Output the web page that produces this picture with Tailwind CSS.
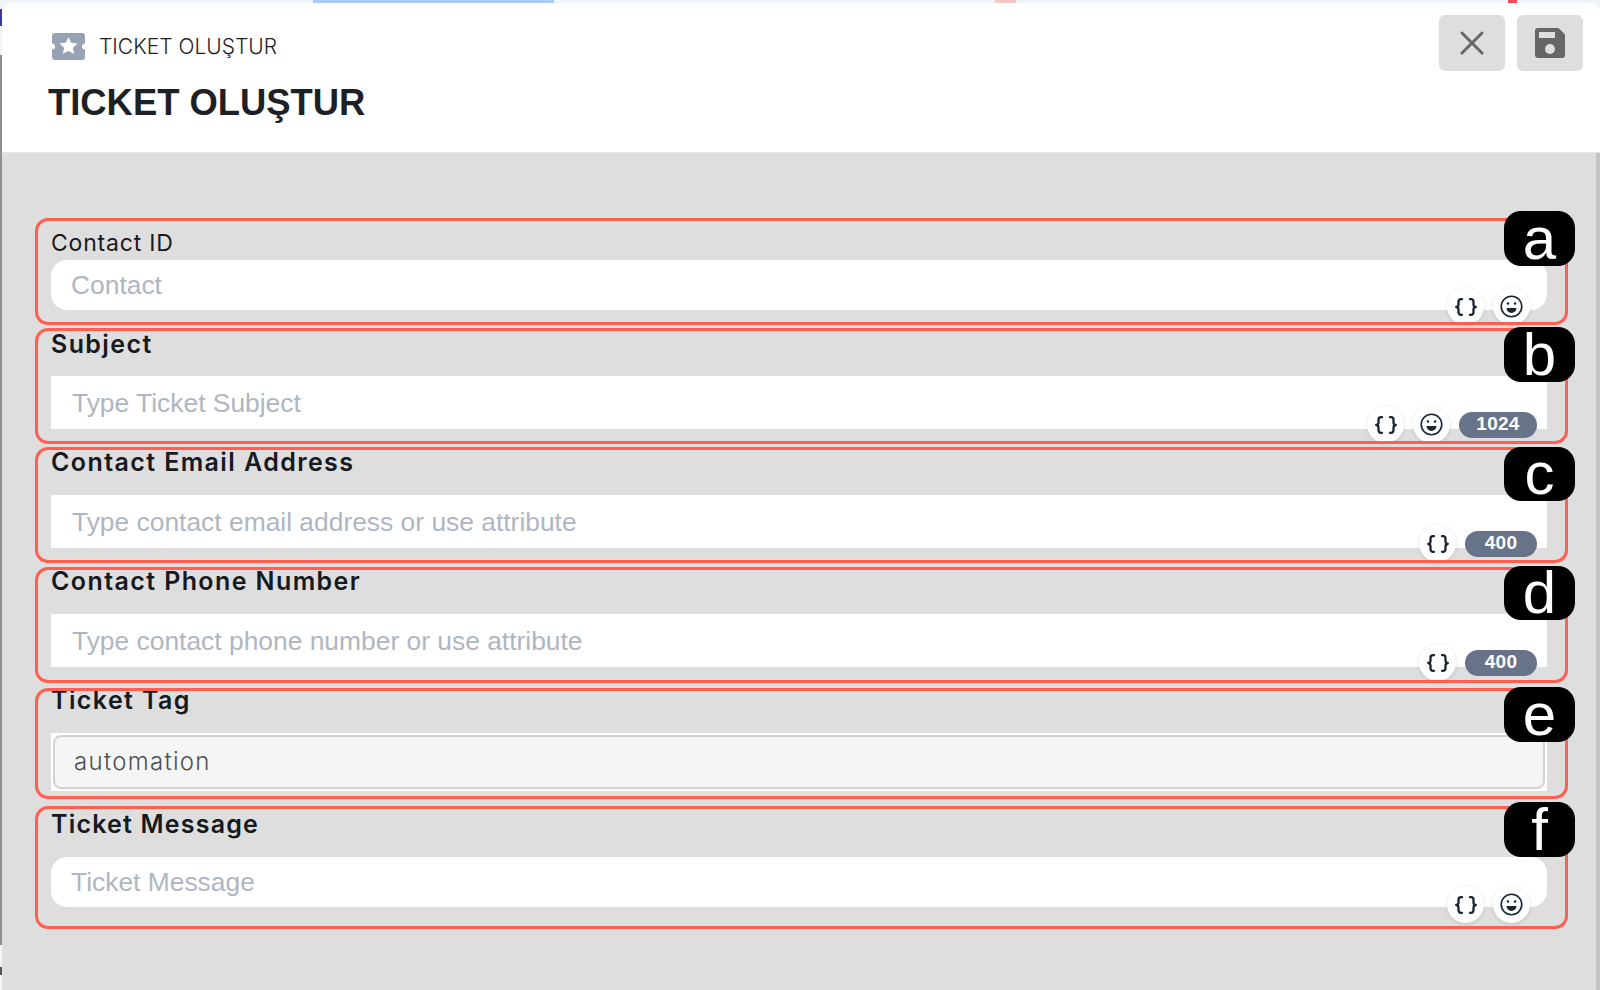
<!DOCTYPE html>
<html lang="tr">
<head>
    <meta charset="UTF-8">
    <meta name="viewport" content="width=device-width, initial-scale=1.0">
    <title>Ticket Oluştur</title>
    <script src="https://cdn.jsdelivr.net/npm/@tailwindcss/browser@4"></script>
</head>
<body class="w-[1600px] h-[990px] overflow-hidden bg-[#f1f4f9] font-['Inter',sans-serif]">
    <svg class="hidden">
        <symbol id="braces" viewBox="0 0 22 18">
            <path d="M7 1.200H6A2.500 2.500 0 0 0 3.500 3.700V6.500A2.500 2.500 0 0 1 1.200 9a2.500 2.500 0 0 1 2.300 2.500v2.800A2.500 2.500 0 0 0 6 16.800h1M15 1.200h1a2.500 2.500 0 0 1 2.500 2.500v2.800A2.500 2.500 0 0 0 20.800 9a2.500 2.500 0 0 0-2.300 2.500v2.800a2.500 2.500 0 0 1-2.500 2.500h-1" fill="none" stroke="#1b2430" stroke-width="2.300" stroke-linecap="round" stroke-linejoin="round"/>
        </symbol>
        <symbol id="smile" viewBox="0 0 24 24">
            <circle cx="12" cy="12" r="10.700" fill="none" stroke="#1b2430" stroke-width="1.700"/>
            <circle cx="8.300" cy="8.800" r="1.300" fill="#1b2430"/>
            <circle cx="15.700" cy="8.800" r="1.300" fill="#1b2430"/>
            <path d="M6.800 13.500h10.400a5.200 5.200 0 0 1-10.400 0z" fill="#1b2430"/>
        </symbol>
    </svg>

    <!-- page behind the modal -->
    <div class="flex h-[3px]">
        <div class="w-[313px]"></div>
        <div class="w-[241px] bg-[#a8cdf9]"></div>
        <div class="w-[441px]"></div>
        <div class="w-[21px] bg-[#f7c4c4]"></div>
        <div class="w-[492px]"></div>
        <div class="w-[9px] bg-[#f8485e]"></div>
    </div>

    <div class="flex h-[987px]">
        <div class="w-[2px] flex flex-col">
            <div class="h-[6px]"></div>
            <div class="h-[17px] bg-[#3b3aa5]"></div>
            <div class="h-[29px]"></div>
            <div class="h-[890px] bg-[#8f8f8f]"></div>
            <div class="h-[22px]"></div>
            <div class="h-[8px] bg-[#555555]"></div>
        </div>

        <main class="flex-1 flex flex-col rounded-tl-[10px] rounded-tr-[10px] overflow-hidden">
            <header class="h-[150px] shrink-0 bg-white flex justify-between pl-[46px] pr-[17px] border-b border-[#e6e6e6]">
                <div>
                    <div class="flex items-center gap-[14px] mt-[31px] pl-[4px] h-[26px]">
                        <svg class="w-[33px] h-[27px] -mt-[2px]" viewBox="0 0 33 27">
                            <path d="M3 0h27a3 3 0 0 1 3 3v7.500a3 3 0 0 0 0 6V24a3 3 0 0 1-3 3H3a3 3 0 0 1-3-3v-7.500a3 3 0 0 0 0-6V3a3 3 0 0 1 3-3z" fill="#97a3b4"/>
                            <path d="M16.500 4l2.700 5.800 6.400.700-4.800 4.300 1.400 6.300-5.700-3.200-5.700 3.200 1.400-6.300-4.800-4.300 6.400-.700z" fill="#fff"/>
                        </svg>
                        <span class="text-[21px] font-light text-[#1f2329] whitespace-nowrap">TICKET OLUŞTUR</span>
                    </div>
                    <h1 class="mt-[21px] font-['Liberation_Sans',sans-serif] font-bold text-[36.400px] leading-[44px] text-[#1d2125] whitespace-nowrap">TICKET OLUŞTUR</h1>
                </div>
                <div class="flex gap-[12px] mt-[12px]">
                    <button class="w-[66px] h-[56px] rounded-[6px] bg-[#dedede] flex items-center justify-center">
                        <svg class="w-[24px] h-[24px]" viewBox="0 0 24 24"><path d="M2 2l20 20M22 2L2 22" stroke="#666" stroke-width="3" stroke-linecap="round"/></svg>
                    </button>
                    <button class="w-[66px] h-[56px] rounded-[6px] bg-[#dedede] flex items-center justify-center">
                        <svg class="w-[30px] h-[30px]" viewBox="0 0 30 30">
                            <path d="M3 0h20.500L30 6.500V27a3 3 0 0 1-3 3H3a3 3 0 0 1-3-3V3a3 3 0 0 1 3-3z" fill="#666"/>
                            <rect x="4" y="4" width="16" height="6" fill="#dedede"/>
                            <circle cx="15" cy="21" r="5" fill="#dedede"/>
                        </svg>
                    </button>
                </div>
            </header>

            <div class="flex-1 flex bg-[#dedede]">
                <div class="flex-1 pl-[33px] pr-[28px] pt-[65px]">

                    <div class="relative h-[107px] flex flex-col pl-[16px] pr-[21px] pt-[11px]">
                        <label class="block text-[23px] leading-[28px] font-normal tracking-[0.8px] text-[#16191d]">Contact ID</label>
                        <div class="relative mt-[3px] h-[50px] rounded-[16px] bg-white pl-[20px] pt-[2px] flex items-center font-['Liberation_Sans',sans-serif] text-[26.400px] text-[#afb6c1]">
                            Contact
                            <div class="absolute right-[17px] bottom-[-15px] flex items-center gap-[9px]">
                                <span class="w-[37px] h-[37px] rounded-full bg-white shadow-[0_1px_4px_rgba(0,0,0,0.12)] flex items-center justify-center"><svg class="w-[22px] h-[18px]"><use href="#braces"/></svg></span>
                                <span class="w-[37px] h-[37px] rounded-full bg-white shadow-[0_1px_4px_rgba(0,0,0,0.12)] flex items-center justify-center"><svg class="w-[23px] h-[23px]"><use href="#smile"/></svg></span>
                            </div>
                        </div>
                        <div class="absolute inset-0 border-[3px] border-[#ff5f50] rounded-[13px] pointer-events-none"></div>
                        <div class="absolute right-[-7px] top-[-7px] w-[71px] h-[55px] rounded-[17px] bg-black text-white font-['Liberation_Sans',sans-serif] text-[60px] leading-[55px] text-center">a</div>
                    </div>

                    <div class="relative h-[116px] mt-[3px] flex flex-col pl-[16px] pr-[21px] pt-[2px]">
                        <label class="block text-[25px] leading-[28px] font-semibold tracking-[1.400px] text-[#16191d]">Subject</label>
                        <div class="relative mt-[18px] h-[53px] bg-white pl-[21px] pt-[2px] flex items-center font-['Liberation_Sans',sans-serif] text-[26.400px] text-[#afb6c1]">
                            Type Ticket Subject
                            <div class="absolute right-[10px] bottom-[-14px] flex items-center gap-[9px]">
                                <span class="w-[37px] h-[37px] rounded-full bg-white shadow-[0_1px_4px_rgba(0,0,0,0.12)] flex items-center justify-center"><svg class="w-[22px] h-[18px]"><use href="#braces"/></svg></span>
                                <span class="w-[37px] h-[37px] rounded-full bg-white shadow-[0_1px_4px_rgba(0,0,0,0.12)] flex items-center justify-center"><svg class="w-[23px] h-[23px]"><use href="#smile"/></svg></span>
                                <span class="w-[78px] h-[26px] rounded-full bg-[#667388] text-white text-[19px] font-bold tracking-[0.3px] flex items-center justify-center">1024</span>
                            </div>
                        </div>
                        <div class="absolute inset-0 border-[3px] border-[#ff5f50] rounded-[13px] pointer-events-none"></div>
                        <div class="absolute right-[-7px] top-[-1px] w-[71px] h-[55px] rounded-[17px] bg-black text-white font-['Liberation_Sans',sans-serif] text-[60px] leading-[55px] text-center">b</div>
                    </div>

                    <div class="relative h-[116px] mt-[3px] flex flex-col pl-[16px] pr-[21px] pt-[1px]">
                        <label class="block text-[25px] leading-[28px] font-semibold tracking-[1.400px] text-[#16191d]">Contact Email Address</label>
                        <div class="relative mt-[19px] h-[53px] bg-white pl-[21px] pt-[2px] flex items-center font-['Liberation_Sans',sans-serif] text-[26.400px] text-[#afb6c1]">
                            Type contact email address or use attribute
                            <div class="absolute right-[10px] bottom-[-14px] flex items-center gap-[9px]">
                                <span class="w-[37px] h-[37px] rounded-full bg-white shadow-[0_1px_4px_rgba(0,0,0,0.12)] flex items-center justify-center"><svg class="w-[22px] h-[18px]"><use href="#braces"/></svg></span>
                                <span class="w-[72px] h-[26px] rounded-full bg-[#667388] text-white text-[19px] font-bold tracking-[0.3px] flex items-center justify-center">400</span>
                            </div>
                        </div>
                        <div class="absolute inset-0 border-[3px] border-[#ff5f50] rounded-[13px] pointer-events-none"></div>
                        <div class="absolute right-[-7px] top-0 w-[71px] h-[54px] rounded-[17px] bg-black text-white font-['Liberation_Sans',sans-serif] text-[60px] leading-[54px] text-center">c</div>
                    </div>

                    <div class="relative h-[116px] mt-[4px] flex flex-col pl-[16px] pr-[21px]">
                        <label class="block text-[25px] leading-[28px] font-semibold tracking-[1.400px] text-[#16191d]">Contact Phone Number</label>
                        <div class="relative mt-[19px] h-[53px] bg-white pl-[21px] pt-[2px] flex items-center font-['Liberation_Sans',sans-serif] text-[26.400px] text-[#afb6c1]">
                            Type contact phone number or use attribute
                            <div class="absolute right-[10px] bottom-[-14px] flex items-center gap-[9px]">
                                <span class="w-[37px] h-[37px] rounded-full bg-white shadow-[0_1px_4px_rgba(0,0,0,0.12)] flex items-center justify-center"><svg class="w-[22px] h-[18px]"><use href="#braces"/></svg></span>
                                <span class="w-[72px] h-[26px] rounded-full bg-[#667388] text-white text-[19px] font-bold tracking-[0.3px] flex items-center justify-center">400</span>
                            </div>
                        </div>
                        <div class="absolute inset-0 border-[3px] border-[#ff5f50] rounded-[13px] pointer-events-none"></div>
                        <div class="absolute right-[-7px] top-[-1px] w-[71px] h-[54px] rounded-[17px] bg-black text-white font-['Liberation_Sans',sans-serif] text-[60px] leading-[54px] text-center">d</div>
                    </div>

                    <div class="relative h-[111px] mt-[5px] flex flex-col pl-[16px] pr-[21px]">
                        <label class="block -mt-[2px] text-[25px] leading-[28px] font-semibold tracking-[1.400px] text-[#16191d]">Ticket Tag</label>
                        <div class="mt-[19px] h-[58px] bg-white p-[2px]">
                            <div class="h-[54px] rounded-[8px] bg-[#f5f5f5] border-2 border-[#d2d2d2] pl-[19px] flex items-center text-[24px] font-light tracking-[1.300px] text-[#4f4f4f]">automation</div>
                        </div>
                        <div class="absolute inset-0 border-[3px] border-[#ff5f50] rounded-[13px] pointer-events-none"></div>
                        <div class="absolute right-[-7px] top-[-1px] w-[71px] h-[55px] rounded-[17px] bg-black text-white font-['Liberation_Sans',sans-serif] text-[60px] leading-[55px] text-center">e</div>
                    </div>

                    <div class="relative h-[123px] mt-[7px] flex flex-col pl-[16px] pr-[21px] pt-[4px]">
                        <label class="block text-[25px] leading-[28px] font-semibold tracking-[1.200px] text-[#16191d]">Ticket Message</label>
                        <div class="relative mt-[19px] h-[50px] rounded-[16px] bg-white pl-[20px] pt-[2px] flex items-center font-['Liberation_Sans',sans-serif] text-[26.400px] text-[#afb6c1]">
                            Ticket Message
                            <div class="absolute right-[17px] bottom-[-16px] flex items-center gap-[9px]">
                                <span class="w-[37px] h-[37px] rounded-full bg-white shadow-[0_1px_4px_rgba(0,0,0,0.12)] flex items-center justify-center"><svg class="w-[22px] h-[18px]"><use href="#braces"/></svg></span>
                                <span class="w-[37px] h-[37px] rounded-full bg-white shadow-[0_1px_4px_rgba(0,0,0,0.12)] flex items-center justify-center"><svg class="w-[23px] h-[23px]"><use href="#smile"/></svg></span>
                            </div>
                        </div>
                        <div class="absolute inset-0 border-[3px] border-[#ff5f50] rounded-[13px] pointer-events-none"></div>
                        <div class="absolute right-[-7px] top-[-4px] w-[71px] h-[55px] rounded-[17px] bg-black text-white font-['Liberation_Sans',sans-serif] text-[60px] leading-[55px] text-center">f</div>
                    </div>

                </div>
                <div class="w-[4px] bg-[#c4c4c4]"></div>
            </div>
        </main>
    </div>
</body>
</html>
